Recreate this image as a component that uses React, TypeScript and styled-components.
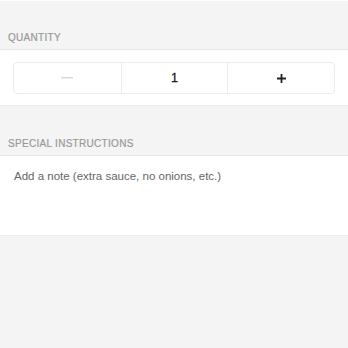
import React from "react";
import styled, { createGlobalStyle } from "styled-components";

const Global = createGlobalStyle`
  html, body { margin: 0; padding: 0; background: #f4f4f4; }
  body { font-family: "Liberation Sans", Arial, sans-serif; }
  * { box-sizing: border-box; }
`;

const Page = styled.div`
  width: 348px;
  min-height: 348px;
  background: #f4f4f4;
  border-top: 1px solid #fbfbfb;
`;

const SectionHeader = styled.div<{ $h: number }>`
  height: ${(p) => p.$h}px;
  display: flex;
  align-items: flex-end;
  padding: 0 8px 6px;
  border-bottom: 1px solid #e8e8e8;
  color: #999;
  font-size: 10px;
  letter-spacing: 0.3px;
  text-transform: uppercase;
  -webkit-text-stroke: 0.2px #999;
`;

const WhiteSection = styled.div<{ $h: number }>`
  height: ${(p) => p.$h}px;
  background: #fff;
  border-bottom: 1px solid #ececec;
`;

const StepperWrap = styled.div`
  padding: 12px 13px;
`;

const Stepper = styled.div`
  display: grid;
  grid-template-columns: 1fr 1fr 1fr;
  height: 32px;
  border: 1px solid #ececec;
  border-radius: 4px;
`;

const Cell = styled.div<{ $divider?: boolean }>`
  display: flex;
  align-items: center;
  justify-content: center;
  border-left: ${(p) => (p.$divider ? "1px solid #ececec" : "none")};
  color: #1a1a1a;
  font-size: 12.5px;
  -webkit-text-stroke: 0.3px #1a1a1a;
`;

const Note = styled.div`
  padding: 14px 14px;
  color: #666;
  font-size: 11.5px;
`;

export default function App() {
  return (
    <>
      <Global />
      <Page>
        <SectionHeader $h={49}>Quantity</SectionHeader>
        <WhiteSection $h={56}>
          <StepperWrap>
            <Stepper>
              <Cell>
                <svg width="12" height="2" viewBox="0 0 12 2">
                  <rect width="12" height="1.4" fill="#d8d8d8" />
                </svg>
              </Cell>
              <Cell $divider>1</Cell>
              <Cell $divider>
                <svg width="9" height="9" viewBox="0 0 9 9">
                  <path d="M4.5 0v9M0 4.5h9" stroke="#222" strokeWidth="1.8" />
                </svg>
              </Cell>
            </Stepper>
          </StepperWrap>
        </WhiteSection>
        <SectionHeader $h={50}>Special Instructions</SectionHeader>
        <WhiteSection $h={80}>
          <Note>Add a note (extra sauce, no onions, etc.)</Note>
        </WhiteSection>
      </Page>
    </>
  );
}
